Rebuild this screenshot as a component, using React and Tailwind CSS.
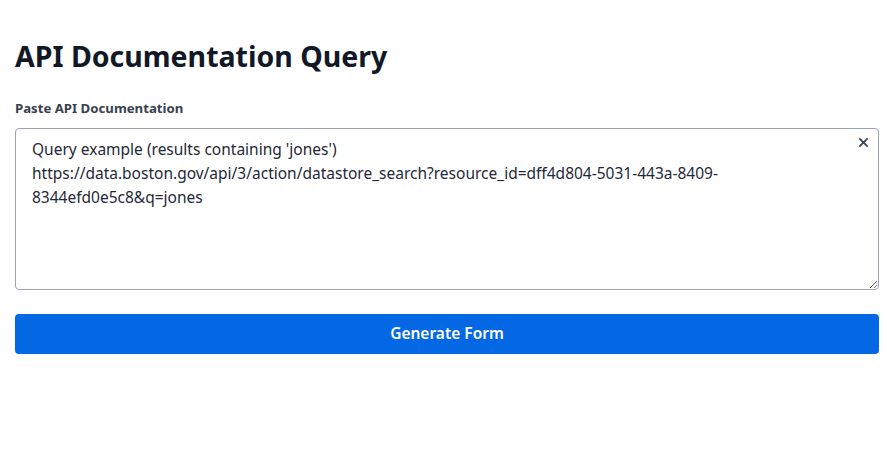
import React from "react";

export default function App() {
  const text =
    "Query example (results containing 'jones')\nhttps://data.boston.gov/api/3/action/datastore_search?resource_id=dff4d804-5031-443a-8409-8344efd0e5c8&q=jones";
  return (
    <div className="min-h-screen bg-white pl-[15px] pr-[8px] pt-[38px]" style={{ fontFamily: '"Noto Sans", "Open Sans", sans-serif' }}>
      <h1 className="text-[28.5px] leading-[36px] font-bold text-[#111827]">API Documentation Query</h1>
      <label className="mt-[25px] block text-[13.2px] leading-[18px] font-bold text-[#374151]">Paste API Documentation</label>
      <div className="relative mt-[11px]">
        <textarea
          defaultValue={text}
          spellCheck={false}
          className="block h-[162px] w-full resize-y rounded-[4px] border border-[#9ca3af] pl-[16px] pr-[40px] pt-[8px] text-[15.5px] leading-[24px] text-[#1f2937] outline-none"
          style={{ fontFamily: '"Noto Sans", "Open Sans", sans-serif' }}
        />
        <button className="absolute right-[10px] top-[9px] text-[#334155]">
          <svg width="11" height="11" viewBox="0 0 12 12" fill="none" stroke="currentColor" strokeWidth="1.8">
            <path d="M1.5 1.5 L10.5 10.5 M10.5 1.5 L1.5 10.5" />
          </svg>
        </button>
      </div>
      <button className="mt-[24px] flex h-[40px] w-full items-center justify-center rounded-[4px] bg-[#0468e5] text-[15.5px] font-semibold text-white">
        Generate Form
      </button>
    </div>
  );
}
